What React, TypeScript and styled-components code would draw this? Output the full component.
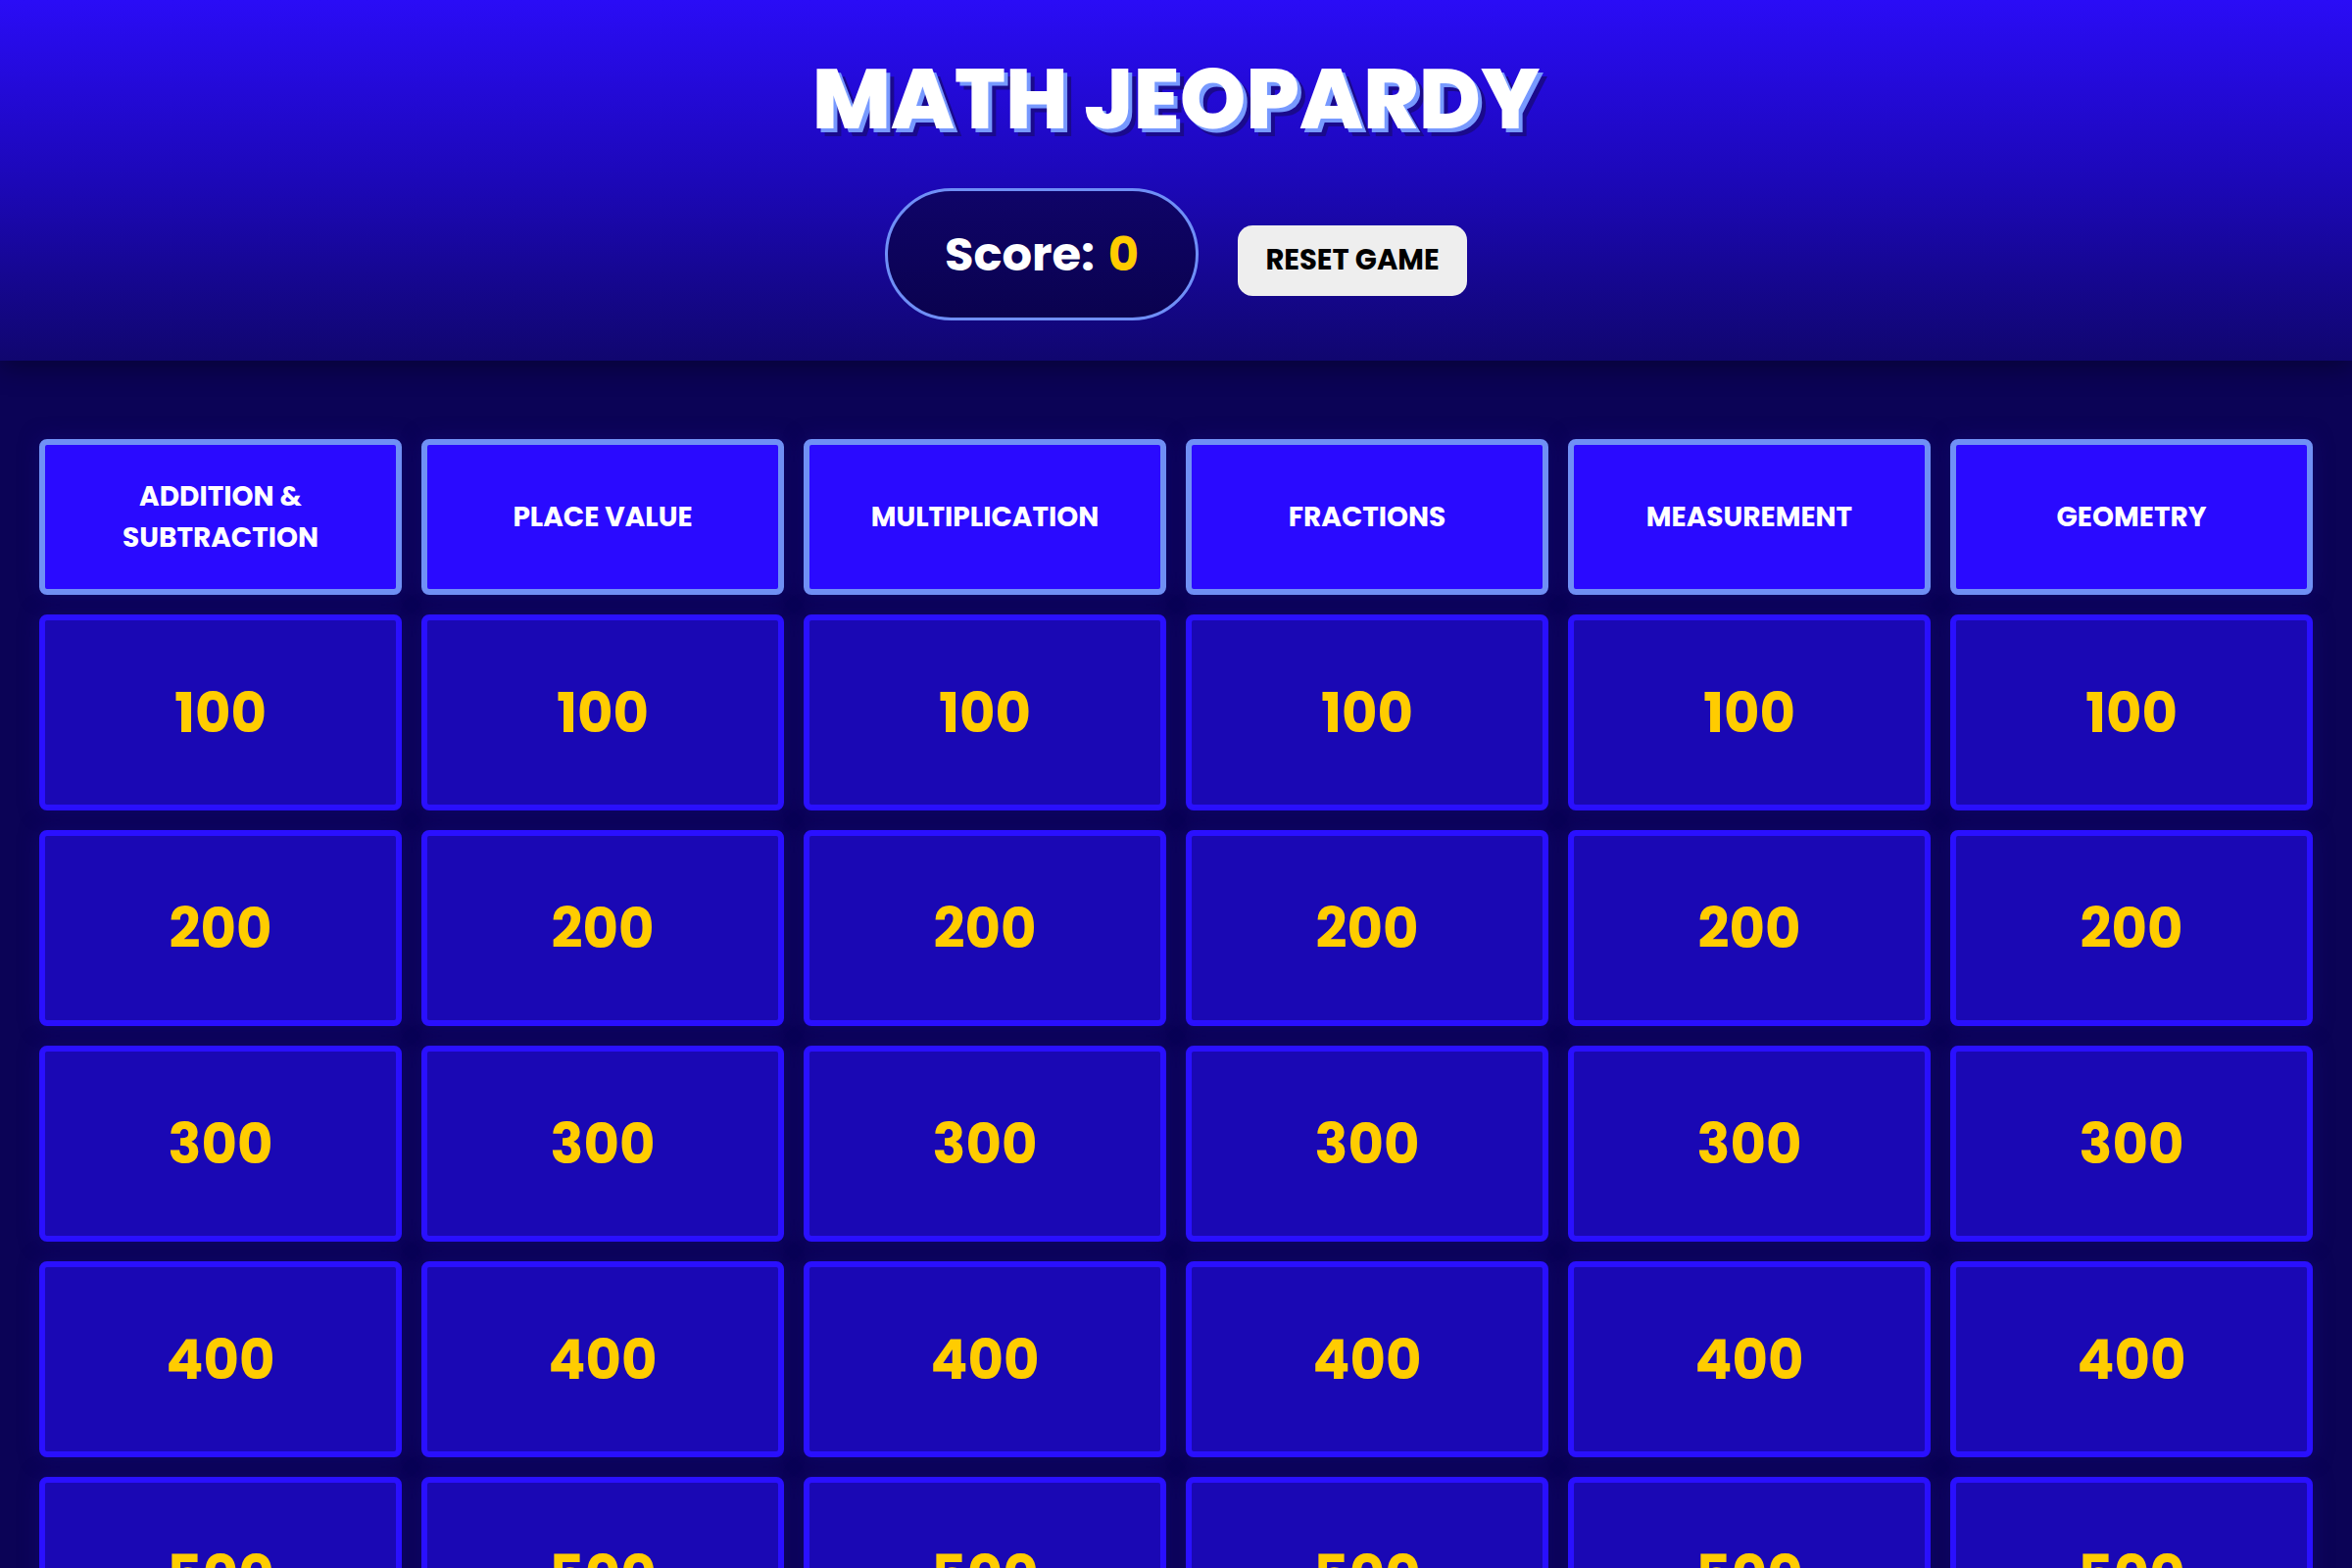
import styled, { createGlobalStyle } from "styled-components";

const GlobalStyle = createGlobalStyle`
  * { box-sizing: border-box; }
  body {
    margin: 0;
    background: #0b0356;
    font-family: "Poppins", "Inter", "Noto Sans", sans-serif;
  }
`;

const Header = styled.header`
  height: 368px;
  display: flex;
  flex-direction: column;
  align-items: center;
  padding-top: 46px;
  background: linear-gradient(180deg, #2a0cf6 0%, #1c08b8 50%, #10066f 100%);
  box-shadow: 0 8px 24px rgba(0, 0, 0, 0.35);
  position: relative;
  z-index: 1;
`;

const Title = styled.h1`
  margin: 0;
  font-size: 86px;
  line-height: 110px;
  font-weight: 800;
  letter-spacing: 0;
  color: #ffffff;
  text-shadow: 4px 4px 0 #7799ff, 8px 8px 0 #1a0a8c;
`;

const Controls = styled.div`
  display: flex;
  align-items: center;
  gap: 40px;
  margin-top: 36px;
`;

const ScorePill = styled.div`
  width: 320px;
  height: 135px;
  display: flex;
  align-items: center;
  justify-content: center;
  border: 3px solid #6f8ff7;
  border-radius: 68px;
  background: linear-gradient(180deg, #0f0468 0%, #0a024f 100%);
  color: #ffffff;
  font-size: 48px;
  font-weight: 700;
`;

const ScoreValue = styled.span`
  color: #ffcc00;
  margin-left: 14px;
`;

const ResetButton = styled.button`
  width: 234px;
  height: 72px;
  margin-top: 12px;
  border: none;
  border-radius: 15px;
  background: #eeeeee;
  color: #000000;
  font-family: inherit;
  font-size: 29px;
  font-weight: 700;
  cursor: pointer;
`;

const Board = styled.main`
  display: grid;
  grid-template-columns: repeat(6, 1fr);
  gap: 20px;
  padding: 80px 40px 40px;
`;

const CategoryCell = styled.div`
  height: 159px;
  display: flex;
  align-items: center;
  justify-content: center;
  text-align: center;
  padding: 0 60px;
  background: #2a0aff;
  border: 6px solid #7090f5;
  border-radius: 8px;
  color: #ffffff;
  font-size: 28px;
  line-height: 42px;
  font-weight: 700;
  text-transform: uppercase;
  box-shadow: 0 0 20px rgba(20, 10, 120, 0.6);
`;

const ValueCell = styled.button<{ $used?: boolean }>`
  height: 200px;
  display: flex;
  align-items: center;
  justify-content: center;
  background: #1a08b4;
  border: 6px solid #2a10ff;
  border-radius: 8px;
  color: ${(p) => (p.$used ? "transparent" : "#ffcc00")};
  font-family: inherit;
  font-size: 56px;
  font-weight: 700;
  cursor: pointer;
  box-shadow: 0 0 20px rgba(20, 10, 120, 0.6);
`;

const categories = [
  "Addition & Subtraction",
  "Place Value",
  "Multiplication",
  "Fractions",
  "Measurement",
  "Geometry",
];

const values = [100, 200, 300, 400, 500];

const App = () => {
  return (
    <>
      <GlobalStyle />
      <Header>
        <Title>MATH JEOPARDY</Title>
        <Controls>
          <ScorePill>
            Score:<ScoreValue>0</ScoreValue>
          </ScorePill>
          <ResetButton>RESET GAME</ResetButton>
        </Controls>
      </Header>
      <Board>
        {categories.map((c) => (
          <CategoryCell key={c}>{c}</CategoryCell>
        ))}
        {values.map((v) =>
          categories.map((c) => <ValueCell key={c + v}>{v}</ValueCell>)
        )}
      </Board>
    </>
  );
};

export default App;
